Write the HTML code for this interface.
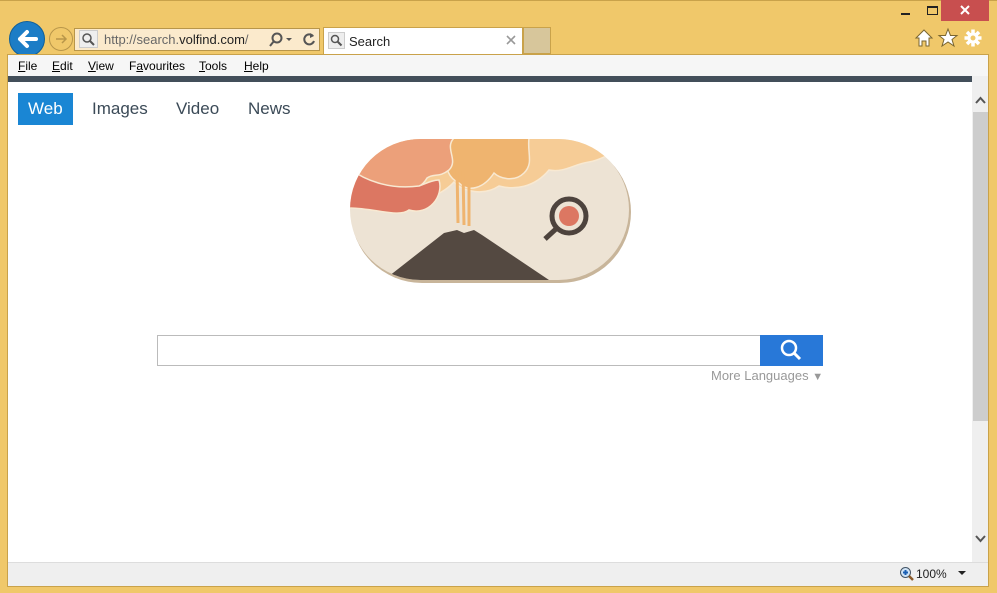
<!DOCTYPE html>
<html><head><style>
*{margin:0;padding:0;box-sizing:border-box}
body{width:997px;height:593px;background:#f0c86a;font-family:"Liberation Sans",sans-serif;position:relative;overflow:hidden}
.a{position:absolute}
.m{position:absolute;top:59px;font-size:12px;color:#000}
.m u{text-decoration:underline}
.tab{font-size:17px;color:#3b4a57;position:absolute;top:99px}
</style></head><body>
<div class="a" style="left:0;top:0;width:997px;height:1px;background:#c9a24a"></div>
<div class="a" style="left:941px;top:0;width:48px;height:21px;background:#c84f4f"></div>
<svg class="a" style="left:941px;top:0" width="48" height="21"><path d="M20 6l8 8M28 6l-8 8" stroke="#fff" stroke-width="2"/></svg>
<div class="a" style="left:901px;top:13px;width:9px;height:2px;background:#222"></div>
<div class="a" style="left:927px;top:6px;width:11px;height:9px;border:1px solid #222;border-top:2px solid #222"></div>
<svg class="a" style="left:912px;top:26px" width="80" height="24">
<path d="M4 12L12 4L20 12H17V20H14V15H10V20H7V12Z" fill="#fff" stroke="#7a6630" stroke-width="1"/>
<path d="M36 3L38.5 9.5H45L40 13.5L42 20L36 16L30 20L32 13.5L27 9.5H33.5Z" fill="#fff" stroke="#7a6630" stroke-width="1"/>
<g transform="translate(61,12)"><g stroke="#fff" stroke-width="3.5"><path d="M0-8.5V8.5M-8.5 0H8.5M-6-6L6 6M-6 6L6-6"/></g><circle r="5.5" fill="#fff"/><circle r="2.5" fill="#f0c86a"/></g>
</svg>
<div class="a" style="left:9px;top:21px;width:36px;height:36px;border-radius:50%;background:#1c7dc6;border:1px solid #0f5f99"></div>
<svg class="a" style="left:9px;top:21px" width="36" height="36"><path d="M27 18H11M18 11l-7 7 7 7" stroke="#fff" stroke-width="4" fill="none" stroke-linecap="round" stroke-linejoin="round"/></svg>
<div class="a" style="left:49px;top:27px;width:24px;height:24px;border-radius:50%;border:1px solid #b8964a"></div>
<svg class="a" style="left:49px;top:27px" width="24" height="24"><path d="M7 12h10M13 8l4 4-4 4" stroke="#b8964a" stroke-width="1.5" fill="none"/></svg>
<div class="a" style="left:74px;top:28px;width:246px;height:23px;background:#fbeacc;border:1px solid #b8964a"></div>
<div class="a" style="left:79px;top:30px;width:19px;height:18px;background:#eee;border:1px solid #ccc"></div>
<svg class="a" style="left:79px;top:30px" width="19" height="18"><circle cx="8" cy="8" r="4" fill="none" stroke="#555" stroke-width="1.5"/><path d="M11 11l4 4" stroke="#555" stroke-width="2"/></svg>
<div class="a" style="left:104px;top:32px;font-size:13px;color:#666">http://search.<span style="color:#222">volfind.com</span>/</div>
<svg class="a" style="left:266px;top:30px" width="52" height="20"><circle cx="11" cy="8" r="4.5" fill="none" stroke="#555" stroke-width="2"/><path d="M8 11l-4 5" stroke="#555" stroke-width="2"/><path d="M20 8h6l-3 3z" fill="#555"/><path d="M47 6a5 5 0 1 0 1 5" fill="none" stroke="#555" stroke-width="2"/><path d="M44 3l4 3-4 2z" fill="#555"/></svg>
<div class="a" style="left:323px;top:27px;width:200px;height:27px;background:#fff;border:1px solid #c9a24a;border-bottom:none"></div>
<div class="a" style="left:328px;top:32px;width:17px;height:17px;background:#eee;border:1px solid #ccc"></div>
<svg class="a" style="left:328px;top:32px" width="17" height="17"><circle cx="7" cy="7" r="3.5" fill="none" stroke="#555" stroke-width="1.5"/><path d="M9.5 9.5l4 4" stroke="#555" stroke-width="2"/></svg>
<div class="a" style="left:349px;top:34px;font-size:13px;color:#222">Search</div>
<svg class="a" style="left:506px;top:35px" width="10" height="10"><path d="M1 1l8 8M9 1l-8 8" stroke="#999" stroke-width="1.6"/></svg>
<div class="a" style="left:523px;top:27px;width:28px;height:27px;background:#d7c69b;border:1px solid #c9a24a"></div>
<div class="a" style="left:7px;top:54px;width:982px;height:533px;background:#fff;border:1px solid #c9a24a"></div>
<div class="a" style="left:8px;top:55px;width:980px;height:21px;background:#f6f6f6"></div>
<div class="m" style="left:18px"><u>F</u>ile</div>
<div class="m" style="left:52px"><u>E</u>dit</div>
<div class="m" style="left:88px"><u>V</u>iew</div>
<div class="m" style="left:129px">F<u>a</u>vourites</div>
<div class="m" style="left:199px"><u>T</u>ools</div>
<div class="m" style="left:244px"><u>H</u>elp</div>
<div class="a" style="left:8px;top:76px;width:965px;height:6px;background:#434f5a"></div>
<div class="a" style="left:972px;top:76px;width:16px;height:486px;background:#efefef"></div>
<div class="a" style="left:973px;top:112px;width:15px;height:309px;background:#cdcdcd"></div>
<svg class="a" style="left:973px;top:92px" width="15" height="460"><path d="M3 11l4.5-5 4.5 5" fill="none" stroke="#555" stroke-width="2"/><path d="M3 444l4.5 5 4.5-5" fill="none" stroke="#555" stroke-width="2"/></svg>
<div class="a" style="left:8px;top:562px;width:980px;height:24px;background:#efefef;border-top:1px solid #ddd"></div>
<svg class="a" style="left:899px;top:566px" width="16" height="16"><circle cx="6.5" cy="6.5" r="5" fill="#cfe3f6" stroke="#456" stroke-width="1"/><path d="M4 6.5h5M6.5 4v5" stroke="#1a5fb4" stroke-width="2"/><path d="M10 10l4 4" stroke="#8a5a2a" stroke-width="2.5"/></svg>
<div class="a" style="left:916px;top:567px;font-size:12px;color:#222">100%</div>
<svg class="a" style="left:958px;top:571px" width="9" height="5"><path d="M0 0h8l-4 4z" fill="#222"/></svg>
<div class="a" style="left:18px;top:93px;width:55px;height:32px;background:#1a86d4"></div>
<div class="tab" style="left:28px;color:#fff">Web</div>
<div class="tab" style="left:92px">Images</div>
<div class="tab" style="left:176px">Video</div>
<div class="tab" style="left:248px">News</div>
<svg class="a" style="left:349px;top:138px" width="283" height="146" viewBox="0 0 283 146">
<defs><clipPath id="c"><rect x="1" y="1" width="279" height="141" rx="70.5"/></clipPath></defs>
<rect x="2" y="3" width="280" height="142" rx="71" fill="#c8b59a"/>
<rect x="1" y="1" width="279" height="141" rx="70.5" fill="#ede3d4"/>
<g clip-path="url(#c)">
<path d="M0 0H280V14C265 10 255 22 240 24C225 26 215 35 200 32C185 50 165 52 150 48C135 58 115 54 105 44C90 60 65 66 45 60C25 70 10 60 0 55Z" fill="#f6cc96" stroke="#f8e9d2" stroke-width="1.5"/>
<path d="M95 0H180C178 15 185 25 175 35C165 45 150 40 145 35C135 50 120 55 110 45C100 40 95 30 100 20Z" fill="#efb46f" stroke="#f8e9d2" stroke-width="1.5"/>
<path d="M0 0H105C95 10 110 22 100 32C90 40 85 35 78 40C70 55 45 58 25 50C10 46 0 42 0 42Z" fill="#eca07a" stroke="#f8e9d2" stroke-width="1.5"/>
<path d="M0 30C15 42 40 52 70 48C80 44 85 42 90 42C95 58 80 78 60 72C50 80 25 70 0 70Z" fill="#dc7762" stroke="#f8e9d2" stroke-width="1.5"/>
<path d="M108 30L109 85M114 32L115 87M120 35L120 88" stroke="#efb46f" stroke-width="3"/>
<path d="M35 142L95 95L108 92L115 95L125 92L133 97L200 142Z" fill="#544941"/>
</g>
<circle cx="220" cy="78" r="17" fill="none" stroke="#4d433d" stroke-width="5"/>
<circle cx="220" cy="78" r="10" fill="#dc7762"/>
<path d="M208 90L196 101" stroke="#4d433d" stroke-width="5"/>
</svg>
<div class="a" style="left:157px;top:335px;width:604px;height:31px;border:1px solid #bbb;border-right:none"></div>
<div class="a" style="left:760px;top:335px;width:63px;height:31px;background:#2878d8"></div>
<svg class="a" style="left:760px;top:335px" width="63" height="31"><circle cx="29" cy="13" r="7" fill="none" stroke="#fff" stroke-width="2.5"/><path d="M34 18l6 6" stroke="#fff" stroke-width="3"/></svg>
<div class="a" style="left:711px;top:368px;font-size:13px;color:#999">More Languages <span style="font-size:11px">▼</span></div>
</body></html>
